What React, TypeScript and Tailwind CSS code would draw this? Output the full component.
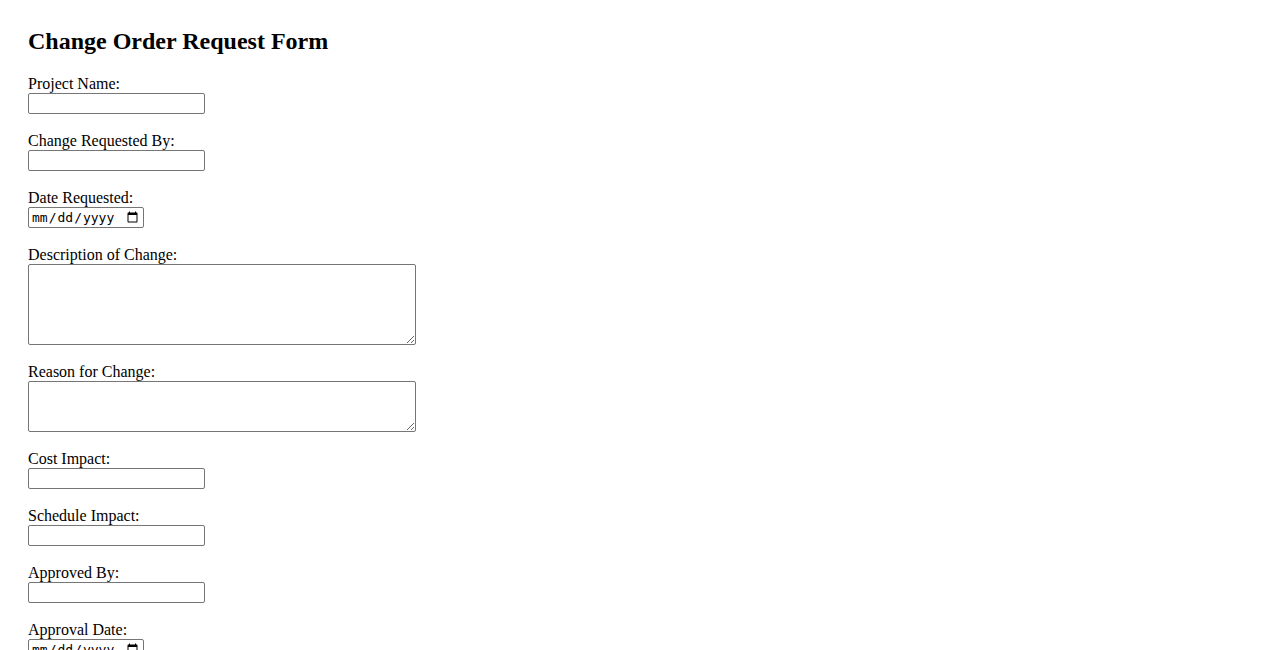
import type { ReactNode } from "react";

const inputCls =
  "block h-[21px] w-[177px] border border-[#767676] rounded-[2px] bg-white px-[2px] text-[13px] font-['DejaVu_Sans',sans-serif]";
const dateCls =
  "block h-[21px] w-[116px] border border-[#767676] rounded-[2px] bg-white px-[2px] text-[13px] leading-[19px] font-['DejaVu_Sans_Mono',monospace]";
const areaCls =
  "block w-[388px] border border-[#767676] rounded-[2px] bg-white p-[2px] text-[13px] font-['DejaVu_Sans_Mono',monospace]";

const Field = ({ label, children }: { label: string; children: ReactNode }) => (
  <div className="mb-[18px]">
    <label className="block text-[16px] leading-[18px]">{label}</label>
    {children}
  </div>
);

const App = () => {
  return (
    <div className="min-h-screen bg-white text-black pl-[28px] pt-[28px] font-['Liberation_Serif',serif]">
      <h2 className="text-[24px] font-bold leading-[27px] mb-[20px]">
        Change Order Request Form
      </h2>
      <form>
        <Field label="Project Name:">
          <input type="text" className={inputCls} />
        </Field>
        <Field label="Change Requested By:">
          <input type="text" className={inputCls} />
        </Field>
        <Field label="Date Requested:">
          <input type="date" className={dateCls} />
        </Field>
        <Field label="Description of Change:">
          <textarea className={`${areaCls} h-[81px]`} />
        </Field>
        <Field label="Reason for Change:">
          <textarea className={`${areaCls} h-[51px]`} />
        </Field>
        <Field label="Cost Impact:">
          <input type="text" className={inputCls} />
        </Field>
        <Field label="Schedule Impact:">
          <input type="text" className={inputCls} />
        </Field>
        <Field label="Approved By:">
          <input type="text" className={inputCls} />
        </Field>
        <Field label="Approval Date:">
          <input type="date" className={dateCls} />
        </Field>
      </form>
    </div>
  );
};

export default App;
